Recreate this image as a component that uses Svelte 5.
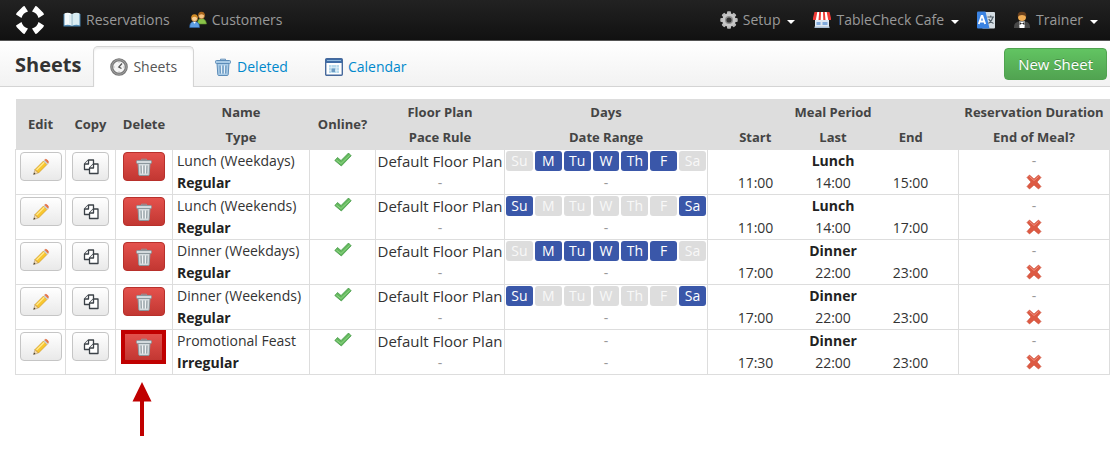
<script lang="ts">
  type Sheet = {
    name: string;
    type: string;
    days: string[];
    meal: string;
    start: string;
    last: string;
    end: string;
  };

  const week = ["Su", "M", "Tu", "W", "Th", "F", "Sa"];
  const weekdays = ["M", "Tu", "W", "Th", "F"];
  const weekends = ["Su", "Sa"];

  const sheets: Sheet[] = [
    { name: "Lunch (Weekdays)", type: "Regular", days: weekdays, meal: "Lunch", start: "11:00", last: "14:00", end: "15:00" },
    { name: "Lunch (Weekends)", type: "Regular", days: weekends, meal: "Lunch", start: "11:00", last: "14:00", end: "17:00" },
    { name: "Dinner (Weekdays)", type: "Regular", days: weekdays, meal: "Dinner", start: "17:00", last: "22:00", end: "23:00" },
    { name: "Dinner (Weekends)", type: "Regular", days: weekends, meal: "Dinner", start: "17:00", last: "22:00", end: "23:00" },
    { name: "Promotional Feast", type: "Irregular", days: [], meal: "Dinner", start: "17:30", last: "22:00", end: "23:00" },
  ];

  // row that the callout points at
  const highlighted = sheets.length - 1;
</script>

{#snippet trash(body: string, line: string)}
  <svg class="icon" viewBox="0 0 18 18" aria-hidden="true">
    <path d="M6.500 2.500V1.200h5v1.300" fill="none" stroke={line} />
    <path d="M3 5.500h12l-.8 11.200q-.1.8-1 .8H4.800q-.9 0-1-.8z" fill={body} stroke={line} />
    <rect x="1.500" y="2.500" width="15" height="3" rx="1" fill={body} stroke={line} />
    <path d="M6 7.500l.3 8M9 7.500v8M12 7.500l-.3 8" fill="none" stroke={line} />
    <path d="M7.500 7.500v8M10.500 7.500v8" fill="none" stroke="#fff" stroke-opacity=".7" />
  </svg>
{/snippet}

<nav class="navbar">
  <a class="logo" href="#home" aria-label="Home">
    <svg width="28" height="28" viewBox="0 0 28 28" aria-hidden="true">
      <g fill="#fff">
        {#each [0, 90, 180, 270] as angle}
          <path transform="rotate({angle} 14 14)" d="M8.500 0 12 5.500A9 9 0 0 0 5.500 12L0 8.500Q.2 7.400 1 6.500L6.500 1Q7.400.2 8.500 0z" />
        {/each}
      </g>
    </svg>
  </a>
  <a class="item" href="#reservations">
    <svg class="icon" viewBox="0 0 18 18" aria-hidden="true">
      <path d="M.5 3v12.500h17V3" fill="#4d86b0" />
      <path d="M1.500 2.200q4-1 7.500.8v11.800q-3.500-1.500-7.500-.6z" fill="#f4fafc" />
      <path d="M16.500 2.200q-4-1-7.500.8v11.800q3.500-1.500 7.500-.6z" fill="#d9ecf2" />
      <path d="M9 3v12" stroke="#8eb3c4" />
      <path d="M7 4v9.500" stroke="#c9e2ea" />
    </svg>
    Reservations
  </a>
  <a class="item" href="#customers">
    <svg class="icon" viewBox="0 0 18 18" aria-hidden="true">
      <path d="M8.500 13q-.2-5.500 4-5.500t5 5.500z" fill="#8bc34a" stroke="#5b8f2a" stroke-width=".6" />
      <circle cx="12.500" cy="4.800" r="3" fill="#f6c483" stroke="#a4651f" stroke-width=".6" />
      <path d="M9.300 5Q9 .8 12.500.8T15.700 5Q14.500 3.300 12.500 3.300T9.300 5z" fill="#a9661d" />
      <path d="M.7 16.500q-.2-6 4.800-6t5 6z" fill="#5e9fe4" stroke="#2d66b0" stroke-width=".6" />
      <path d="M4 10.700l1.500 2 1.500-2z" fill="#fff" />
      <circle cx="5.500" cy="7.400" r="3" fill="#f9cf94" stroke="#b06d1e" stroke-width=".6" />
      <path d="M2.200 7.500Q2 3.200 5.500 3.200t3.300 4.300Q7.500 5.800 5.500 5.800T2.200 7.500z" fill="#d18c27" />
    </svg>
    Customers
  </a>
  <div class="right">
    <a class="item" href="#setup">
      <svg class="icon" viewBox="0 0 18 18" aria-hidden="true">
        <g fill="#b9b9b9">
          {#each [0, 45, 90, 135] as angle}
            <rect x="7" y=".3" width="4" height="17.400" rx="1" transform="rotate({angle} 9 9)" />
          {/each}
        </g>
        <circle cx="9" cy="9" r="6.800" fill="#c6c6c6" />
        <circle cx="9" cy="9" r="4" fill="#8d8d8d" />
        <circle cx="9" cy="9" r="2.600" fill="#303030" />
      </svg>
      Setup
      <span class="caret"></span>
    </a>
    <a class="item" href="#venue">
      <svg class="icon" viewBox="0 0 18 18" aria-hidden="true">
        <path d="M2 8h14v9H2z" fill="#dce7f3" />
        <path d="M1.500 1h15L18 7v2H0V7z" fill="#ef3a36" />
        <path d="M4.300 1h1.900l-.7 8H2.800zM8 1h2l.3 8H7.700zM11.800 1h1.900l1.500 8h-2.700z" fill="#fff" />
        <path d="M3.500 11h4v3h-4zM9.500 11h5v3h-5z" fill="#7fa9dc" />
        <path d="M1.500 15.500h15V17h-15z" fill="#a8bdd3" />
      </svg>
      TableCheck Cafe
      <span class="caret"></span>
    </a>
    <a class="item" href="#language" aria-label="Language">
      <svg class="icon" viewBox="0 0 18 18" aria-hidden="true">
        <rect x="5" y="1" width="13" height="16.500" rx="1" fill="#d5dde3" />
        <path d="M1 .5h7.500l4 17H1q-1 0-1-1v-15q0-1 1-1z" fill="#3b83e2" />
        <path d="M1.800 13 4.600 5h.8l2.800 8M3 10.500h4" fill="none" stroke="#fff" stroke-width="1.800" />
        <path d="M10.500 6h6.500M13.700 4.500V6M16 6q-1 4-4.500 6.500M11.800 8q1.500 3.500 4.700 4.500" fill="none" stroke="#53616b" stroke-width="1.200" />
      </svg>
    </a>
    <a class="item" href="#account">
      <svg class="icon" viewBox="0 0 18 18" aria-hidden="true">
        <path d="M1 17q-.3-6 5-6.500h6q5.300.5 5 6.500z" fill="#484848" />
        <path d="M6 10.500h6L11.500 17h-5z" fill="#fff" />
        <path d="M6.500 11 9 12.500l2.500-1.500v3L9 12.500 6.500 14z" fill="#222" />
        <circle cx="9" cy="6" r="4" fill="#f0ad55" />
        <path d="M4.800 6Q4 .7 9 .7T13.200 6Q12 4 9 4T4.800 6z" fill="#69401d" />
      </svg>
      Trainer
      <span class="caret"></span>
    </a>
  </div>
</nav>

<header class="subnav">
  <h1>Sheets</h1>
  <a class="tab active" href="#sheets">
    <svg class="icon" viewBox="0 0 18 18" aria-hidden="true">
      <circle cx="9" cy="9" r="7.300" fill="#f5f5f5" stroke="#777" stroke-width="3" />
      <circle cx="9" cy="9" r="7.300" fill="none" stroke="#aaa" stroke-width=".8" />
      <path d="M12 5.500 8.800 9l2.700 1.500" fill="none" stroke="#555" stroke-width="1.300" />
      <path d="M9 3.500v1M9 13.500v1M3.500 9h1M13.500 9h1" stroke="#999" />
    </svg>
    Sheets
  </a>
  <a class="tab" href="#deleted">
    {@render trash("#a9cbe6", "#5c8cb8")}
    Deleted
  </a>
  <a class="tab" href="#calendar">
    <svg class="icon" viewBox="0 0 18 18" aria-hidden="true">
      <rect x=".7" y=".7" width="16.600" height="16.600" rx="1" fill="#fff" stroke="#46699c" stroke-width="1.400" />
      <path d="M1 1h16v4H1z" fill="#3f6ca5" />
      <path d="M2 2.500h14" stroke="#8fb8dc" />
      <path d="M4 7h10v8H4z" fill="#b9dbed" />
      <path d="M4 9.500h10M4 12.500h10M6.500 7v8M11.500 7v8" stroke="#e3f2f9" stroke-width=".6" />
      <path d="M6.500 10.500h3.500v3.500H6.500z" fill="#6d9cc4" />
    </svg>
    Calendar
  </a>
  <button class="new" type="button">New Sheet</button>
</header>

<main>
  <table>
    <colgroup>
      <col class="edit" />
      <col class="copy" />
      <col class="delete" />
      <col class="name" />
      <col class="online" />
      <col class="floor" />
      <col class="days" />
      <col />
      <col class="last" />
      <col />
      <col class="duration" />
    </colgroup>
    <thead>
      <tr>
        <th rowspan="2">Edit</th>
        <th rowspan="2">Copy</th>
        <th rowspan="2">Delete</th>
        <th>Name</th>
        <th rowspan="2">Online?</th>
        <th>Floor Plan</th>
        <th>Days</th>
        <th colspan="3">Meal Period</th>
        <th>Reservation Duration</th>
      </tr>
      <tr>
        <th>Type</th>
        <th>Pace Rule</th>
        <th>Date Range</th>
        <th>Start</th>
        <th>Last</th>
        <th>End</th>
        <th>End of Meal?</th>
      </tr>
    </thead>
    {#each sheets as sheet, i}
      <tbody>
        <tr>
          <td rowspan="2">
            <button class="btn" type="button" aria-label="Edit {sheet.name}">
              <svg class="icon" viewBox="0 0 18 18" aria-hidden="true">
                <path d="M1.500 16.500 3 11.500l3.500 3.500z" fill="#f3d9ac" stroke="#a58a5c" stroke-width=".5" />
                <path d="M1.500 16.500l.6-2 1.400 1.400z" fill="#333" />
                <path d="M3 11.500 11.500 3 15 6.500 6.500 15z" fill="#f8c62f" stroke="#c98d1a" stroke-width=".6" />
                <path d="M4.500 12 12.300 4.200" stroke="#ffe98f" stroke-width="1.300" />
                <path d="M11.500 3l1.200-1.200 3.500 3.500L15 6.500z" fill="#c9ced3" />
                <path d="M12.700 1.800q1-1.300 2.700.3t.8 3.200z" fill="#ee7544" stroke="#d65a2b" stroke-width=".5" />
              </svg>
            </button>
          </td>
          <td rowspan="2">
            <button class="btn small" type="button" aria-label="Copy {sheet.name}">
              <svg class="icon" viewBox="0 0 18 18" aria-hidden="true">
                <g fill="#fff" stroke="#3b4147" stroke-width="1.300" stroke-linejoin="round">
                  <path d="M6.500 2h5v9.500H2.500V6z" />
                  <path d="M6.500 2v4h-4" />
                  <path d="M11.500 6H16v9.500H7.500V10z" />
                  <path d="M11.500 6v4h-4" />
                </g>
              </svg>
            </button>
          </td>
          <td class="delete-cell" rowspan="2">
            <button class="btn danger" type="button" aria-label="Delete {sheet.name}">
              {@render trash("#d3dadd", "#8b979d")}
            </button>
            {#if i === highlighted}
              <span class="frame"></span>
            {/if}
          </td>
          <td class="text">{sheet.name}</td>
          <td class="check" rowspan="2">
            <svg class="icon" viewBox="0 0 18 18" role="img" aria-label="Yes">
              <path d="M.8 9.500 3.500 6.500 7 9.500 14.500 2 17.200 4.800 7.300 15z" fill="#62b85c" stroke="#3d9440" stroke-width=".7" stroke-linejoin="round" />
              <path d="M2.300 9 7 12.500 15.700 4.200" fill="none" stroke="#93d689" />
            </svg>
          </td>
          <td class="plan">Default Floor Plan</td>
          <td>
            {#if sheet.days.length}
              <div class="week">
                {#each week as day}
                  <span class="day" class:on={sheet.days.includes(day)}>{day}</span>
                {/each}
              </div>
            {:else}
              <span class="none">-</span>
            {/if}
          </td>
          <td class="strong" colspan="3">{sheet.meal}</td>
          <td class="none">-</td>
        </tr>
        <tr>
          <td class="text strong">{sheet.type}</td>
          <td class="none">-</td>
          <td class="none">-</td>
          <td class="open">{sheet.start}</td>
          <td class="open">{sheet.last}</td>
          <td>{sheet.end}</td>
          <td class="cross">
            <svg width="16" height="16" viewBox="0 0 16 16" role="img" aria-label="No">
              <path d="M3.500 1 8 5 12.500 1 15 3.500 11 8l4 4.500-2.500 2.500L8 11l-4.500 4L1 12.500 5 8 1 3.500z" fill="#dd5a43" stroke="#c9462f" stroke-width=".6" stroke-linejoin="round" />
              <path d="M3.500 2.500 8 6.500l4.500-4" fill="none" stroke="#ee9180" />
            </svg>
          </td>
        </tr>
      </tbody>
    {/each}
  </table>
  <svg class="arrow" width="20" height="54" viewBox="0 0 20 54" aria-hidden="true">
    <path d="M10 0 19.500 19.500H12V54H8V19.500H.5z" fill="#c00000" />
  </svg>
</main>

<style>
  :global(body) {
    margin: 0;
    background: #fff;
    color: #333;
    font: 14px/22px "Open Sans", "Noto Sans", sans-serif;
  }

  a {
    text-decoration: none;
  }

  .icon {
    width: 18px;
    height: 18px;
    flex: none;
  }

  .navbar {
    display: flex;
    align-items: center;
    gap: 19px;
    height: 40px;
    padding: 0 12px 0 16px;
    background: linear-gradient(#222, #111);
    border-bottom: 1px solid #555;
  }
  .logo,
  .logo svg {
    display: block;
  }
  .item {
    display: flex;
    align-items: center;
    gap: 5px;
    color: #999;
  }
  .right {
    display: flex;
    gap: 18px;
    margin-left: auto;
  }
  .caret {
    margin: 4px 0 0 2px;
    border: 4px solid transparent;
    border-top-color: #fff;
    border-bottom: 0;
  }

  .subnav {
    display: flex;
    align-items: flex-end;
    gap: 3px;
    height: 45px;
    padding: 0 3px 0 15px;
    background: linear-gradient(#fff, #f2f2f2);
    border-bottom: 1px solid #d4d4d4;
  }
  h1 {
    margin: 0 9px 0 0;
    font-size: 20px;
    line-height: 42px;
  }
  .tab {
    display: flex;
    align-items: center;
    gap: 5px;
    height: 40px;
    margin-bottom: -1px;
    padding: 0 16px;
    border: 1px solid transparent;
    border-bottom: 0;
    border-radius: 5px 5px 0 0;
    color: #08c;
  }
  .tab.active {
    border-color: #d4d4d4;
    background: #fff;
    box-shadow: inset 0 2px 2px #eee;
    color: #555;
  }
  .new {
    align-self: center;
    height: 32px;
    margin-left: auto;
    padding: 0 13px;
    border: 1px solid #4fa34f;
    border-radius: 4px;
    background: linear-gradient(#62c462, #51a351);
    color: #fff;
    font: inherit;
    font-size: 15px;
    text-shadow: 0 -1px 0 rgba(0, 0, 0, 0.25);
  }

  main {
    padding: 12px 0 0 15px;
  }
  table {
    width: 100%;
    border-collapse: collapse;
    table-layout: fixed;
  }
  .edit,
  .copy {
    width: 50px;
  }
  .delete {
    width: 57px;
  }
  .name {
    width: 137px;
  }
  .online {
    width: 66px;
  }
  .floor {
    width: 129px;
  }
  .days {
    width: 203px;
  }
  .last {
    width: 60px;
  }
  .duration {
    width: 151px;
  }

  th {
    height: 25px;
    padding: 0;
    background: #ddd;
    color: #444;
    font-size: 13px;
    white-space: nowrap;
  }
  tbody {
    border: 1px solid #ddd;
  }
  td {
    height: 22px;
    padding: 0;
    border-right: 1px solid #ddd;
    text-align: center;
    vertical-align: top;
    white-space: nowrap;
  }
  .open {
    border-right: 0;
  }
  .text {
    padding-left: 4px;
    text-align: left;
  }
  .plan {
    font-size: 15px;
  }
  .strong {
    color: #222;
    font-weight: bold;
  }
  .none {
    color: #999;
  }

  .btn {
    display: flex;
    align-items: center;
    justify-content: center;
    width: 42px;
    height: 29px;
    margin: 2px auto 0;
    padding: 0;
    border: 1px solid #c5c5c5;
    border-radius: 4px;
    background: linear-gradient(#fff, #e9e9e9);
  }
  .small {
    width: 37px;
  }
  .danger {
    border-color: #b8302b;
    background: linear-gradient(#e4524d, #c23732);
  }

  .delete-cell {
    position: relative;
  }
  .frame {
    position: absolute;
    top: 0;
    left: 5px;
    box-sizing: border-box;
    width: 45px;
    height: 34px;
    border: 4px solid #c00000;
  }
  .arrow {
    display: block;
    margin: 7px 0 0 117px;
  }

  .week {
    display: grid;
    grid-template-columns: repeat(7, 1fr);
    gap: 2px;
    padding: 1px;
  }
  .day {
    border-radius: 3px;
    background: #ddd;
    color: #f8f8f8;
    line-height: 20px;
  }
  .day.on {
    background: #3a57a9;
    color: #fff;
  }

  .check svg {
    display: block;
    margin: 1px auto;
  }
  .cross svg {
    display: block;
    margin: 2px auto;
  }
</style>
